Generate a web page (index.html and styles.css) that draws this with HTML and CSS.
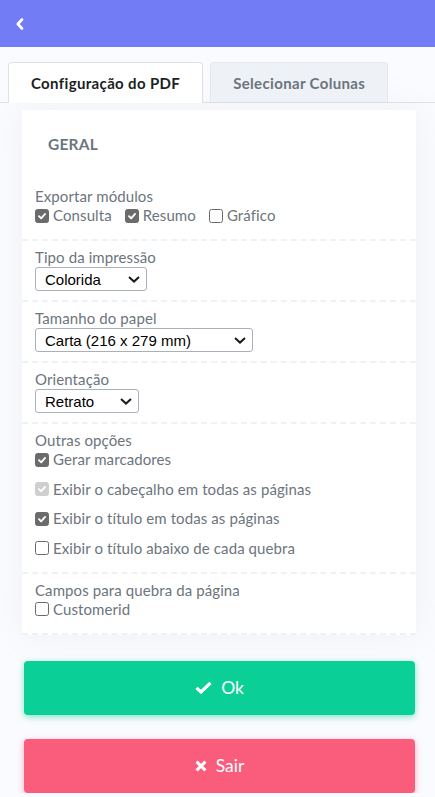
FILE: index.html
```html
<!DOCTYPE html>
<html lang="pt">
<head>
<meta charset="utf-8">
<title>Configuração do PDF</title>
<link rel="stylesheet" href="styles.css">
</head>
<body>
<header class="topbar">
  <svg class="back" width="10" height="12" viewBox="0 0 10 12"><polyline points="7,1.5 2.8,6 7,10.5" fill="none" stroke="#fff" stroke-width="2.6" stroke-linecap="round" stroke-linejoin="round"/></svg>
</header>

<nav class="tabs">
  <div class="tab active">Configuração do PDF</div>
  <div class="tab">Selecionar Colunas</div>
</nav>

<main class="card">
  <div class="card-title">GERAL</div>

  <section class="sec sec-checks">
    <div class="lbl">Exportar módulos</div>
    <div class="inline-checks">
      <label class="chk"><span class="box on"><svg viewBox="0 0 14 14"><polyline points="3.5,7.2 6,9.7 10.6,4.6" /></svg></span>Consulta</label>
      <label class="chk"><span class="box on"><svg viewBox="0 0 14 14"><polyline points="3.5,7.2 6,9.7 10.6,4.6" /></svg></span>Resumo</label>
      <label class="chk"><span class="box"></span>Gráfico</label>
    </div>
  </section>

  <section class="sec">
    <div class="lbl">Tipo da impressão</div>
    <div class="sel w1"><span>Colorida</span><svg class="chev" viewBox="0 0 12 7"><polyline points="1,1 6,5.6 11,1"/></svg></div>
  </section>

  <section class="sec">
    <div class="lbl">Tamanho do papel</div>
    <div class="sel w2"><span>Carta (216 x 279 mm)</span><svg class="chev" viewBox="0 0 12 7"><polyline points="1,1 6,5.6 11,1"/></svg></div>
  </section>

  <section class="sec">
    <div class="lbl">Orientação</div>
    <div class="sel w3"><span>Retrato</span><svg class="chev" viewBox="0 0 12 7"><polyline points="1,1 6,5.6 11,1"/></svg></div>
  </section>

  <section class="sec sec-checks">
    <div class="lbl">Outras opções</div>
    <div class="stack-checks">
      <label class="chk"><span class="box on"><svg viewBox="0 0 14 14"><polyline points="3.5,7.2 6,9.7 10.6,4.6" /></svg></span>Gerar marcadores</label>
      <label class="chk"><span class="box on dis"><svg viewBox="0 0 14 14"><polyline points="3.5,7.2 6,9.7 10.6,4.6" /></svg></span>Exibir o cabeçalho em todas as páginas</label>
      <label class="chk"><span class="box on"><svg viewBox="0 0 14 14"><polyline points="3.5,7.2 6,9.7 10.6,4.6" /></svg></span>Exibir o título em todas as páginas</label>
      <label class="chk"><span class="box"></span>Exibir o título abaixo de cada quebra</label>
    </div>
  </section>

  <section class="sec sec-checks">
    <div class="lbl">Campos para quebra da página</div>
    <label class="chk"><span class="box"></span>Customerid</label>
  </section>
</main>

<div class="actions">
  <button class="btn ok"><svg class="ico" width="17" height="13" viewBox="0 0 17 13"><path d="M1.5 6.8 L6 11 L15.5 1.8" fill="none" stroke="#fff" stroke-width="3.2" stroke-linejoin="miter"/></svg>Ok</button>
  <button class="btn exit"><svg class="ico" width="12" height="12" viewBox="0 0 12 12"><path d="M1.6 1.6 L10.4 10.4 M10.4 1.6 L1.6 10.4" fill="none" stroke="#fff" stroke-width="3"/></svg>Sair</button>
</div>
</body>
</html>
```

FILE: styles.css
```css
* { box-sizing: border-box; }
html, body { margin: 0; padding: 0; }
body {
  background: #fafbfe;
  font-family: "Lato", "Noto Sans", sans-serif;
  color: #6c757d;
  width: 435px;
}

.topbar {
  height: 47px;
  background: #727cf5;
  display: flex;
  align-items: center;
  padding-left: 15px;
}
.back { display: block; }

.tabs {
  margin-top: 15px;
  padding: 0 8px;
  display: flex;
  gap: 7px;
  border-bottom: 1px solid #dee2e6;
}
.tab {
  height: 40px;
  padding: 0 22px;
  display: flex;
  align-items: center;
  font-weight: 700;
  font-size: 15px;
  letter-spacing: 0.35px;
  color: #6c757d;
  background: #eef2f7;
  border: 1px solid #e3e7ee;
  border-bottom: 0;
  border-radius: 4px 4px 0 0;
}
.tab.active {
  background: #fff;
  color: #1b1f24;
  border-color: #dee2e6;
  margin-bottom: -1px;
  height: 41px;
}

.card {
  margin: 7px 19px 0 22px;
  background: #fff;
  box-shadow: 0 0 35px 0 rgba(154, 161, 171, 0.12);
}
.card-title {
  padding: 24px 26px 26px;
  line-height: 20px;
  font-size: 15.5px;
  font-weight: 700;
  letter-spacing: 0.2px;
  color: #6c757d;
}

.sec {
  padding: 7px 13px 9px;
  border-bottom: 2px dashed #eef1f5;
}
.sec-checks { padding-bottom: 14px; }
.lbl {
  font-size: 15px;
  line-height: 19px;
  letter-spacing: 0.1px;
  color: #6c757d;
}

.sel {
  position: relative;
  height: 24px;
  border: 1px solid #a9b0bc;
  border-radius: 3px;
  padding-left: 9px;
  display: flex;
  align-items: center;
  font-family: "Liberation Sans", Arial, sans-serif;
  font-size: 15px;
  color: #000;
  background: #fff;
}
.w1 { width: 112px; }
.w2 { width: 218px; }
.w3 { width: 104px; }
.chev {
  position: absolute;
  right: 6px;
  top: 8px;
  width: 12px;
  height: 7px;
}
.chev polyline { fill: none; stroke: #1a1a1a; stroke-width: 2; }

.inline-checks { display: flex; gap: 13px; }
.stack-checks { display: flex; flex-direction: column; gap: 10.5px; }
.chk {
  display: flex;
  align-items: center;
  gap: 4px;
  font-size: 15px;
  line-height: 19px;
  letter-spacing: 0.1px;
  color: #6c757d;
}
.box {
  width: 14px;
  height: 14px;
  border: 1px solid #6b6b6b;
  border-radius: 2.5px;
  background: #fff;
  flex: none;
}
.box svg { display: block; width: 12px; height: 12px; }
.box svg polyline { fill: none; stroke: #fff; stroke-width: 2.2; stroke-linecap: round; stroke-linejoin: round; }
.box.on { background: #6b6b6b; }
.box.dis { background: #cfcfcf; border-color: #cfcfcf; }

.actions {
  margin: 26px 20px 0 24px;
  display: flex;
  flex-direction: column;
  gap: 24px;
}
.btn {
  height: 54px;
  border: 0;
  border-radius: 4px;
  display: flex;
  align-items: center;
  justify-content: center;
  gap: 9px;
  font-family: "Lato", "Noto Sans", sans-serif;
  font-size: 17.5px;
  color: #fff;
}
.btn.ok { background: #0acf97; box-shadow: 0 2px 6px 0 rgba(10, 207, 151, 0.5); }
.btn.exit { background: #fa5c7c; box-shadow: 0 2px 6px 0 rgba(250, 92, 124, 0.5); }
.ico { display: block; }
```
